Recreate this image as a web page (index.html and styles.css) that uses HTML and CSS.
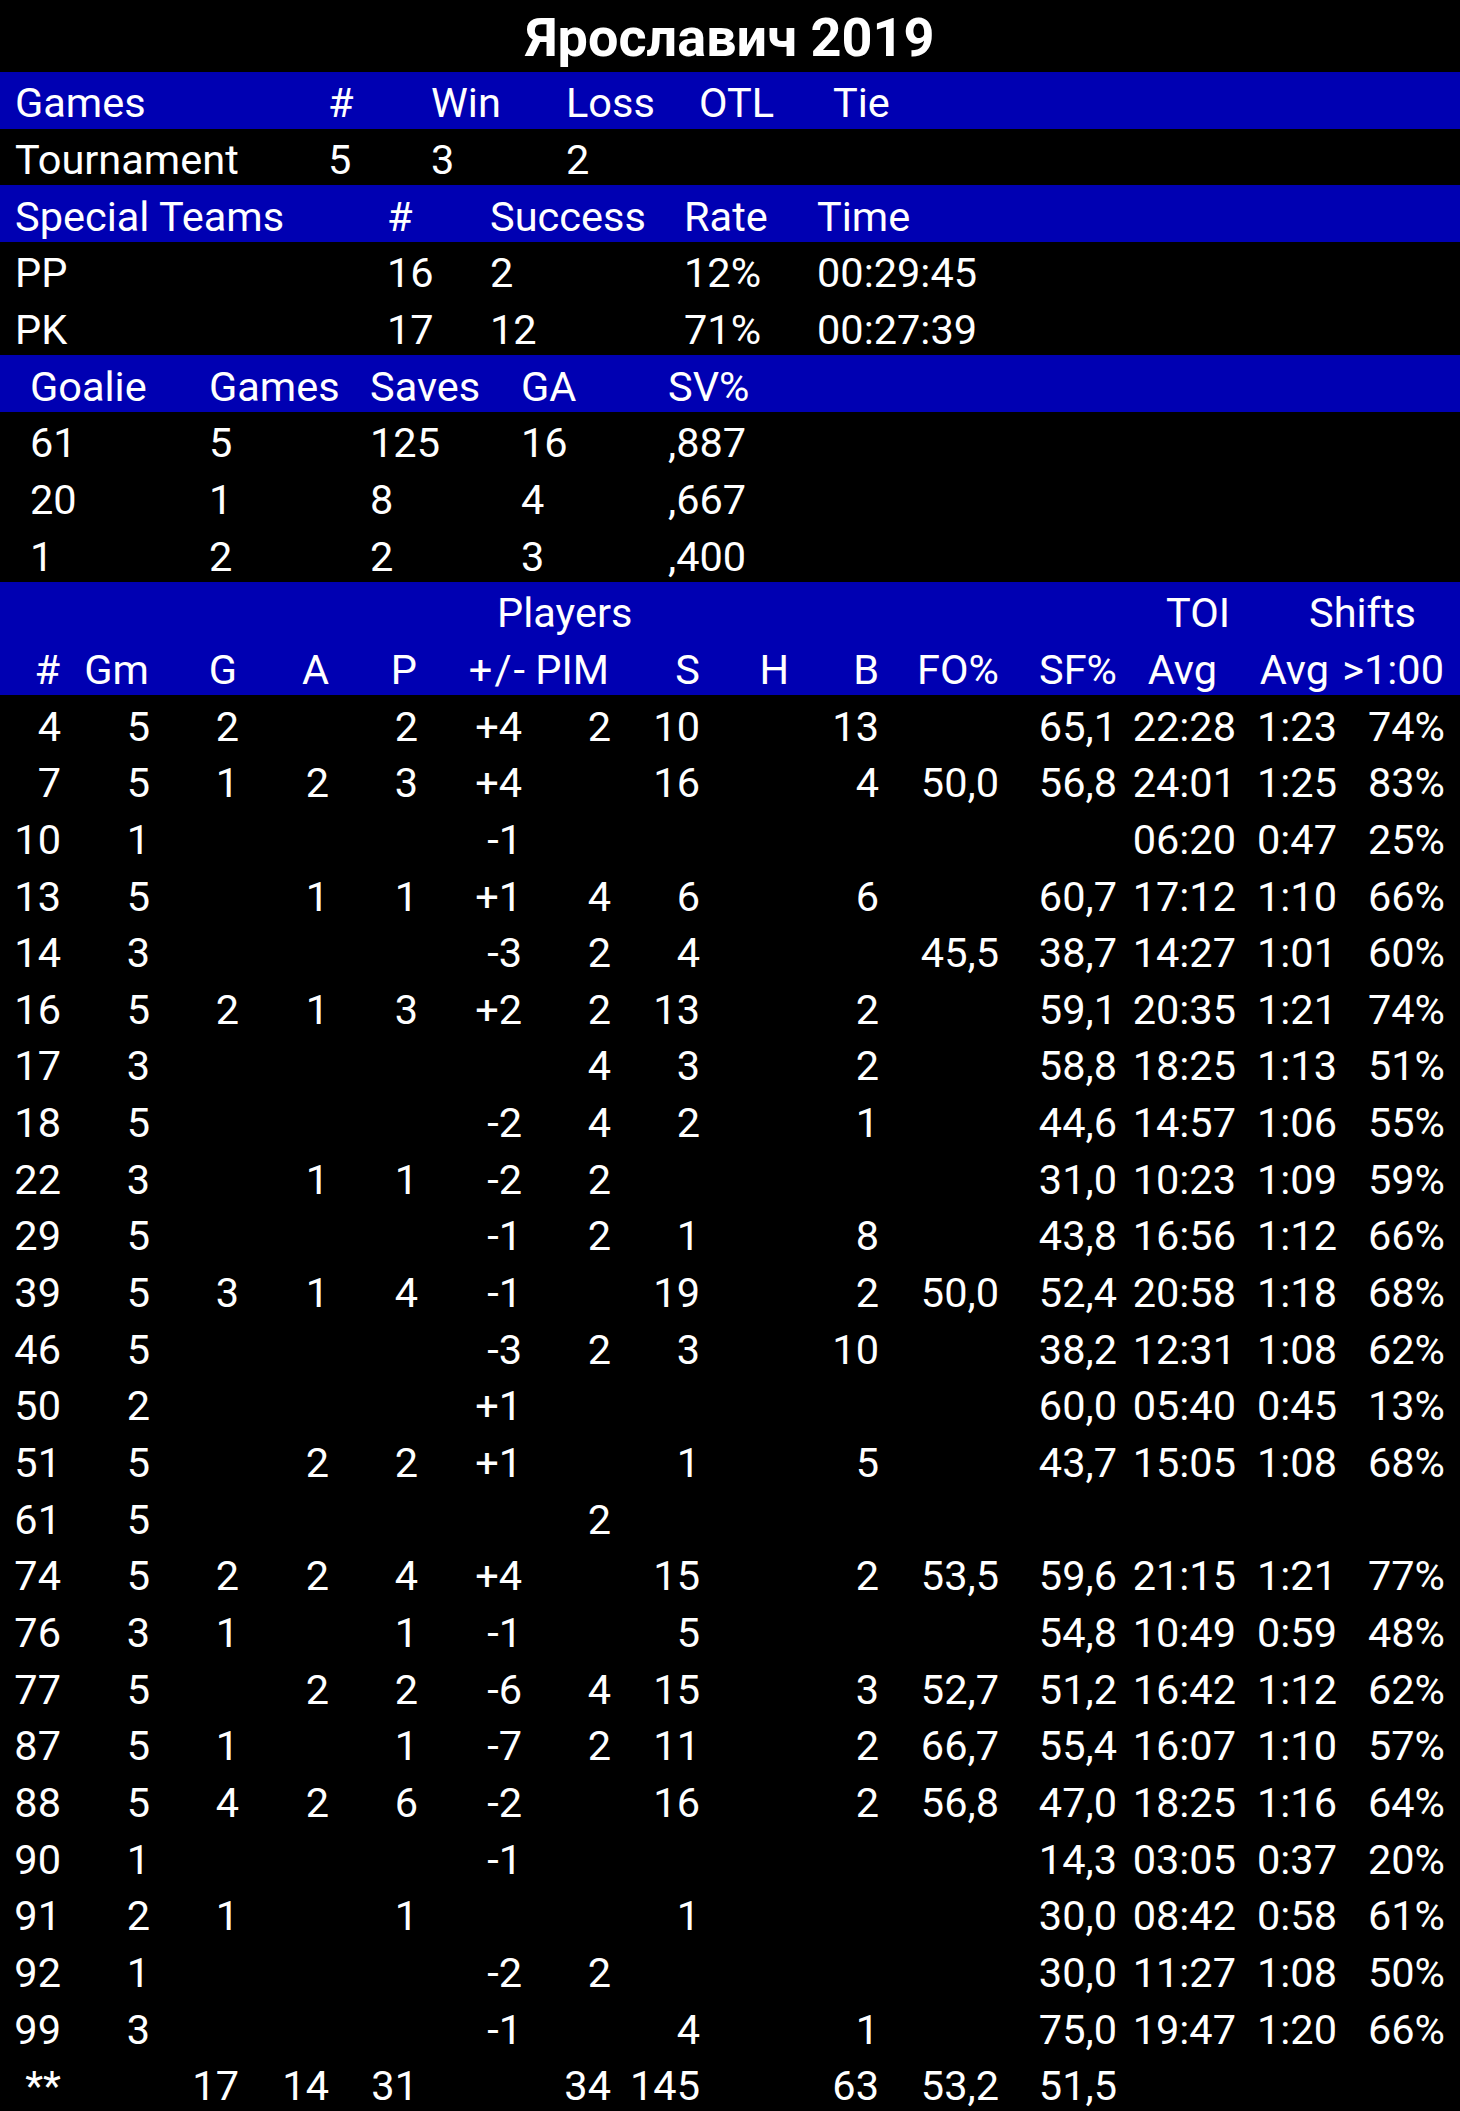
FILE: index.html
```html
<!DOCTYPE html>
<html lang="ru">
<head>
<meta charset="utf-8">
<title>Ярославич 2019</title>
<link rel="stylesheet" href="styles.css">
</head>
<body>
<div class="page">
  <div class="title">Ярославич 2019</div>

  <div class="row games hdr"><span>Games</span><span>#</span><span>Win</span><span>Loss</span><span>OTL</span><span>Tie</span></div>
  <div class="row games"><span>Tournament</span><span>5</span><span>3</span><span>2</span><span></span><span></span></div>

  <div class="row special hdr"><span>Special Teams</span><span>#</span><span>Success</span><span>Rate</span><span>Time</span></div>
  <div class="row special"><span>PP</span><span>16</span><span>2</span><span>12%</span><span>00:29:45</span></div>
  <div class="row special"><span>PK</span><span>17</span><span>12</span><span>71%</span><span>00:27:39</span></div>

  <div class="row goalie hdr"><span>Goalie</span><span>Games</span><span>Saves</span><span>GA</span><span>SV%</span></div>
  <div class="row goalie"><span>61</span><span>5</span><span>125</span><span>16</span><span>,887</span></div>
  <div class="row goalie"><span>20</span><span>1</span><span>8</span><span>4</span><span>,667</span></div>
  <div class="row goalie"><span>1</span><span>2</span><span>2</span><span>3</span><span>,400</span></div>

  <div class="players-head">
    <div class="row groups"><span></span><span>Players</span><span>TOI</span><span>Shifts</span></div>
    <div class="row cols"><span>#</span><span>Gm</span><span>G</span><span>A</span><span>P</span><span class="pm">+/-</span><span>PIM</span><span>S</span><span>H</span><span>B</span><span>FO%</span><span>SF%</span><span>Avg</span><span>Avg</span><span>&gt;1:00</span></div>
  </div>

  <div id="players" class="players"></div>
</div>
<script src="app.js"></script>
</body>
</html>
```

FILE: styles.css
```css
html, body {
  margin: 0;
  padding: 0;
  background: #000;
}
body {
  font-family: Roboto, "Noto Sans", "Liberation Sans", sans-serif;
  color: #fff;
  font-size: 41.5px;
}
.page {
  width: 1460px;
}
.title {
  box-sizing: border-box;
  height: 72px;
  padding-top: 5px;
  line-height: 66px;
  text-align: center;
  font-weight: bold;
  font-size: 54px;
}
.row {
  box-sizing: border-box;
  display: grid;
  height: 56.67px;
  padding-top: 5px;
  align-items: center;
  white-space: nowrap;
}
.hdr {
  background: #0000b2;
}
.games {
  padding-left: 15px;
  grid-template-columns: 313px 103px 135px 133px 134px 1fr;
}
.special {
  padding-left: 15px;
  grid-template-columns: 372px 103px 194px 133px 1fr;
}
.goalie {
  padding-left: 30px;
  grid-template-columns: 179px 161px 151px 147px 1fr;
}
.players-head {
  background: #0000b2;
}
.groups {
  grid-template-columns: 497px 669px 143px 1fr;
}
.cols {
  grid-template-columns: 60px 89px 88px 92px 88px 110px 82px 91px 89px 90px 120px 118px 100px 112px 115px;
  text-align: right;
}
.cols .pm {
  letter-spacing: 2px;
}
.players .row {
  grid-template-columns: 61px 89px 89px 90px 89px 104px 89px 89px 90px 89px 120px 118px 119px 101px 108px;
  text-align: right;
}
```

FILE: app.js
```js
var data = [
  ["4","5","2","","2","+4","2","10","","13","","65,1","22:28","1:23","74%"],
  ["7","5","1","2","3","+4","","16","","4","50,0","56,8","24:01","1:25","83%"],
  ["10","1","","","","-1","","","","","","","06:20","0:47","25%"],
  ["13","5","","1","1","+1","4","6","","6","","60,7","17:12","1:10","66%"],
  ["14","3","","","","-3","2","4","","","45,5","38,7","14:27","1:01","60%"],
  ["16","5","2","1","3","+2","2","13","","2","","59,1","20:35","1:21","74%"],
  ["17","3","","","","","4","3","","2","","58,8","18:25","1:13","51%"],
  ["18","5","","","","-2","4","2","","1","","44,6","14:57","1:06","55%"],
  ["22","3","","1","1","-2","2","","","","","31,0","10:23","1:09","59%"],
  ["29","5","","","","-1","2","1","","8","","43,8","16:56","1:12","66%"],
  ["39","5","3","1","4","-1","","19","","2","50,0","52,4","20:58","1:18","68%"],
  ["46","5","","","","-3","2","3","","10","","38,2","12:31","1:08","62%"],
  ["50","2","","","","+1","","","","","","60,0","05:40","0:45","13%"],
  ["51","5","","2","2","+1","","1","","5","","43,7","15:05","1:08","68%"],
  ["61","5","","","","","2","","","","","","","",""],
  ["74","5","2","2","4","+4","","15","","2","53,5","59,6","21:15","1:21","77%"],
  ["76","3","1","","1","-1","","5","","","","54,8","10:49","0:59","48%"],
  ["77","5","","2","2","-6","4","15","","3","52,7","51,2","16:42","1:12","62%"],
  ["87","5","1","","1","-7","2","11","","2","66,7","55,4","16:07","1:10","57%"],
  ["88","5","4","2","6","-2","","16","","2","56,8","47,0","18:25","1:16","64%"],
  ["90","1","","","","-1","","","","","","14,3","03:05","0:37","20%"],
  ["91","2","1","","1","","","1","","","","30,0","08:42","0:58","61%"],
  ["92","1","","","","-2","2","","","","","30,0","11:27","1:08","50%"],
  ["99","3","","","","-1","","4","","1","","75,0","19:47","1:20","66%"],
  ["**","","17","14","31","","34","145","","63","53,2","51,5","","",""]
];
var host = document.getElementById("players");
data.forEach(function (r) {
  var row = document.createElement("div");
  row.className = "row";
  r.forEach(function (c) {
    var s = document.createElement("span");
    s.textContent = c;
    row.appendChild(s);
  });
  host.appendChild(row);
});
```
